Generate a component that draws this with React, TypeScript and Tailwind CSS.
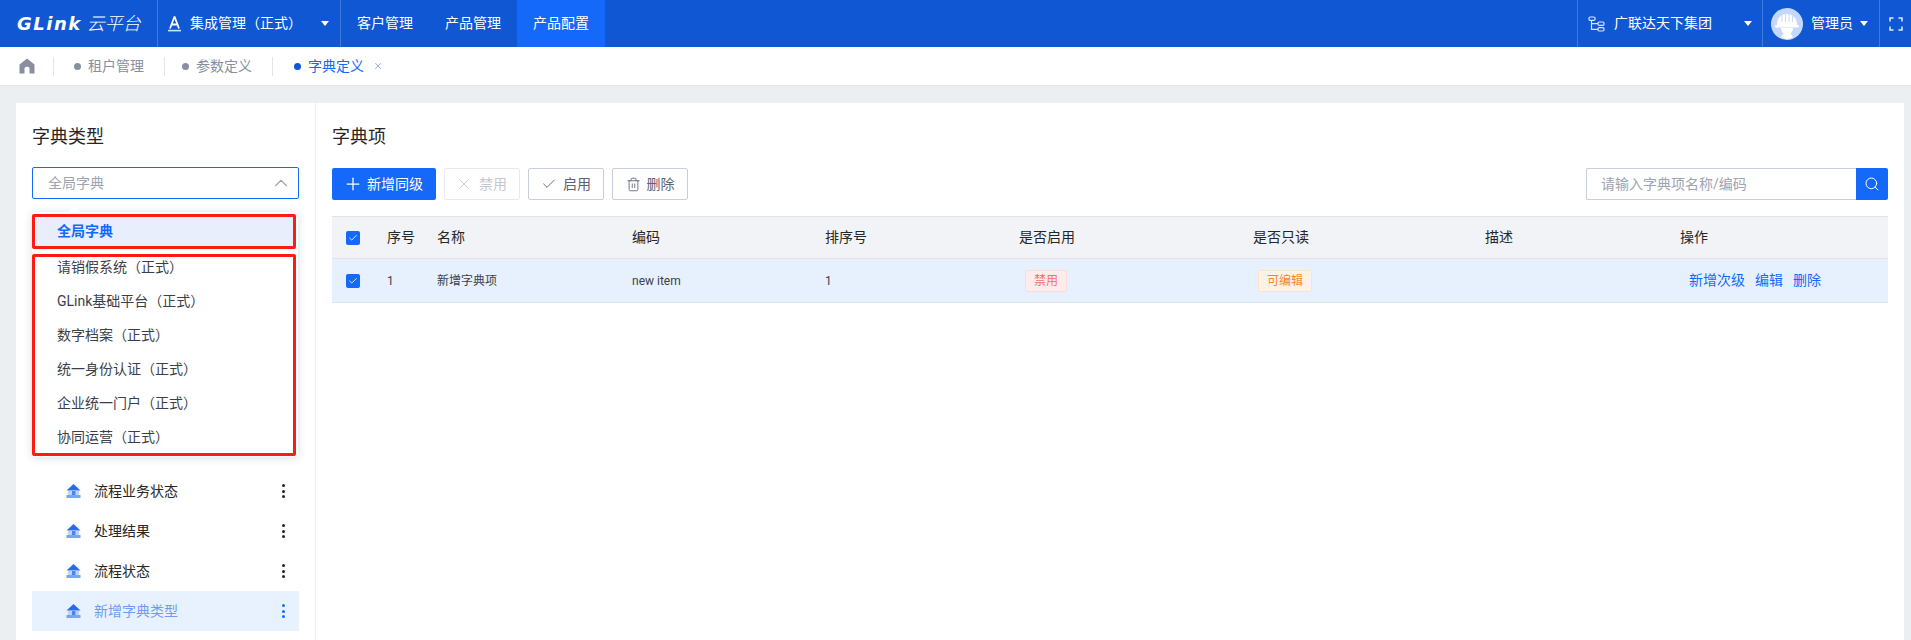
import React from 'react';
import { ChevronUp, Plus, X, Check, Trash2, Search } from 'lucide-react';

const FONT = "font-['Roboto','Noto_Sans_CJK_SC',sans-serif]";

function Caret() {
  return <span className="h-0 w-0 border-x-[4.5px] border-t-[5px] border-x-transparent border-t-white" />;
}

function Divider() {
  return <span className="h-[47px] w-px shrink-0 bg-[#3f7ae0]" />;
}

function AppIcon() {
  return (
    <svg width="15" height="16" viewBox="0 0 15 16" fill="none" className="shrink-0">
      <path d="M7.5 0.5 L3 12.5 M7.5 0.5 L12 12.5 M4.5 8.5 H10.5" stroke="#fff" strokeWidth="1.8" />
      <rect x="1" y="13.8" width="13" height="1.6" fill="#cfe0ff" />
    </svg>
  );
}

function OrgIcon() {
  return (
    <svg width="17" height="16" viewBox="0 0 17 16" fill="none" stroke="#d8e6ff" strokeWidth="1.2">
      <rect x="1" y="1" width="6" height="3.4" rx="1.2" />
      <rect x="10" y="6" width="6" height="3.4" rx="1.2" />
      <rect x="10" y="11.6" width="6" height="3.4" rx="1.2" />
      <path d="M3.5 4.4 V13.3 H10 M3.5 7.7 H10" />
    </svg>
  );
}

function Avatar() {
  return (
    <svg width="32" height="32" viewBox="0 0 32 32">
      <circle cx="16" cy="16" r="16" fill="#c4d8fb" />
      <path d="M6 17 C6 10 10 6 16 6 C22 6 26 10 26 17 Z" fill="#fff" />
      <path d="M11 7.5V14 M14.5 6V14 M18 6V14 M21.5 7.5V14" stroke="#c4d8fb" strokeWidth="0.9" />
      <rect x="4" y="17" width="24" height="2.6" rx="1.3" fill="#fff" />
      <path d="M10 20 H22 C22 23 20.5 24.5 19.5 25.5 L22 29 C19 31.5 13 31.5 10 29 L12.5 25.5 C11.5 24.5 10 23 10 20 Z" fill="#fff" />
    </svg>
  );
}

function Fullscreen() {
  return (
    <svg width="14" height="14" viewBox="0 0 14 14" fill="none" stroke="#e4eeff" strokeWidth="1.5">
      <path d="M1 4.5V1H4.5 M9.5 1H13V4.5 M13 9.5V13H9.5 M4.5 13H1V9.5" />
    </svg>
  );
}

function HomeIcon() {
  return (
    <svg width="16" height="16" viewBox="0 0 16 16" fill="#878fa0">
      <path d="M8 0.5 L15.5 6.5 V15.5 H10.5 V10.5 C10.5 8 5.5 8 5.5 10.5 V15.5 H0.5 V6.5 Z" />
    </svg>
  );
}

function TreeIcon() {
  return (
    <svg width="15" height="14" viewBox="0 0 15 14" className="shrink-0">
      <path d="M7.5 0 L14.5 6.5 H0.5 Z" fill="#2b6bea" />
      <rect x="2" y="7" width="11" height="4" fill="#bcd2f9" />
      <rect x="6" y="7" width="3.4" height="4" fill="#4c84ee" />
      <rect x="0.5" y="11" width="14" height="3" fill="#7aa4f3" />
    </svg>
  );
}

function Dots({ active }: { active?: boolean }) {
  const color = active ? 'bg-[#1a6bf5]' : 'bg-[#262626]';
  return (
    <span className="flex flex-col gap-[2.5px]">
      <i className={`block size-[3px] rounded-full ${color}`} />
      <i className={`block size-[3px] rounded-full ${color}`} />
      <i className={`block size-[3px] rounded-full ${color}`} />
    </span>
  );
}

function Box() {
  return (
    <span className="flex size-[14px] items-center justify-center rounded-[2px] bg-[#1469fb]">
      <Check size={10} color="#fff" strokeWidth={2} />
    </span>
  );
}

function Tab({ label, active }: { label: string; active?: boolean }) {
  return (
    <div className="flex items-center">
      <span className={`mr-[7px] size-[7px] rounded-full ${active ? 'bg-[#0f57d3]' : 'bg-[#878fa0]'}`} />
      <span className={`text-[14px] ${active ? 'text-[#1469fb]' : 'text-[#878fa0]'}`}>{label}</span>
    </div>
  );
}

const sources = ['请销假系统（正式）', 'GLink基础平台（正式）', '数字档案（正式）', '统一身份认证（正式）', '企业统一门户（正式）', '协同运营（正式）'];
const tree = ['流程业务状态', '处理结果', '流程状态', '新增字典类型'];
const tableCols = 'grid grid-cols-[55px_50px_195px_193px_194px_234px_232px_195px_208px] items-center';

export default function App() {
  return (
    <div className={`${FONT} flex h-[640px] w-[1911px] flex-col overflow-hidden bg-[#ebeff2] text-[#262626]`}>
      <header className="flex h-[47px] shrink-0 items-center bg-[#0f57d3] text-[14px] text-white">
        <div className="flex w-[157px] shrink-0 items-center pl-[17px]">
          <span className="font-['DejaVu_Sans',sans-serif] text-[18px] leading-none font-bold tracking-[1.5px] italic">GLink</span>
          <span className="ml-[5px] text-[18px] leading-none font-light italic">云平台</span>
        </div>
        <Divider />
        <div className="flex w-[182px] shrink-0 items-center pl-[9px]">
          <AppIcon />
          <span className="ml-[8px] w-[131px]">集成管理（正式）</span>
          <Caret />
        </div>
        <Divider />
        <nav className="flex">
          <span className="flex h-[47px] w-[88px] items-center justify-center">客户管理</span>
          <span className="flex h-[47px] w-[88px] items-center justify-center">产品管理</span>
          <span className="flex h-[47px] w-[88px] items-center justify-center bg-[#1469fb]">产品配置</span>
        </nav>
        <div className="ml-auto flex items-center">
          <Divider />
          <div className="flex w-[184px] items-center pl-[10px]">
            <OrgIcon />
            <span className="ml-[9px] w-[130px]">广联达天下集团</span>
            <Caret />
          </div>
          <Divider />
          <div className="flex w-[116px] items-center pl-[8px]">
            <Avatar />
            <span className="mr-[7px] ml-[8px]">管理员</span>
            <Caret />
          </div>
          <Divider />
          <div className="flex w-[31px] justify-center">
            <Fullscreen />
          </div>
        </div>
      </header>

      <div className="flex h-[39px] shrink-0 items-center border-b border-[#e2e6ea] bg-white pl-[19px]">
        <HomeIcon />
        <span className="mr-[20px] ml-[18px] h-[19px] w-px bg-[#e2e6ea]" />
        <Tab label="租户管理" />
        <span className="mr-[17px] ml-[20px] h-[19px] w-px bg-[#e2e6ea]" />
        <Tab label="参数定义" />
        <span className="mr-[21px] ml-[20px] h-[19px] w-px bg-[#e2e6ea]" />
        <Tab label="字典定义" active />
        <X size={10} color="#8c9be8" className="ml-[9px]" />
      </div>

      <main className="mt-[17px] ml-[16px] flex h-[537px] w-[1888px] bg-white">
        <aside className="relative w-[300px] shrink-0 border-r border-[#eef0f3] px-[16px] pt-[21px]">
          <h2 className="text-[18px] leading-[26px] font-normal">字典类型</h2>
          <div className="mt-[17px] flex h-[32px] w-[267px] items-center justify-between rounded-[2px] border border-[#1469fb] pr-[6px] pl-[15px] text-[14px] text-[#9ea4b0]">
            全局字典
            <ChevronUp size={22} color="#9ea4b0" strokeWidth={1.2} />
          </div>

          <div className="absolute top-[109px] left-[16px] z-10 h-[245px] w-[266px] rounded-[2px] bg-white text-[14px] shadow-[0_1px_8px_rgba(40,50,80,0.16)]">
            <span className="absolute -top-[4px] left-[38px] size-[9px] rotate-45 bg-white" />
            <div className="relative mx-[4px] mt-[5px] flex h-[29px] items-center bg-[#e8eefc] pl-[21px] font-bold text-[#1469fb]">全局字典</div>
            <div className="mt-[4px] flex flex-col">
              {sources.map(s => (
                <div key={s} className="flex h-[34px] items-center pl-[25px] text-[#3a3f4b]">{s}</div>
              ))}
            </div>
          </div>
          <span className="absolute top-[111px] left-[16px] z-20 h-[35px] w-[264px] rounded-[2px] border-[3px] border-[#fd1c14]" />
          <span className="absolute top-[151px] left-[16px] z-20 h-[202px] w-[264px] rounded-[2px] border-[3px] border-[#fd1c14]" />

          <ul className="mt-[272px] flex flex-col text-[14px]">
            {tree.map((t, i) => {
              const active = i === tree.length - 1;
              return (
                <li key={t} className={`flex h-[40px] items-center pr-[14px] pl-[34px] ${active ? 'bg-[#e8f2fe] text-[#6f9cf3]' : ''}`}>
                  <TreeIcon />
                  <span className="ml-[13px] flex-1">{t}</span>
                  <Dots active={active} />
                </li>
              );
            })}
          </ul>
        </aside>

        <section className="min-w-0 flex-1 px-[16px] pt-[21px]">
          <h2 className="text-[18px] leading-[26px] font-normal">字典项</h2>
          <div className="mt-[18px] flex h-[32px] items-center gap-[8px] text-[14px]">
            <button className="flex h-[32px] w-[104px] items-center justify-center gap-[4px] rounded-[2px] bg-[#1469fb] pr-[2px] text-white">
              <Plus size={20} strokeWidth={1.5} />
              新增同级
            </button>
            <button className="flex h-[32px] w-[76px] items-center justify-center gap-[6px] rounded-[2px] border border-[#e6e9ef] pr-[2px] text-[#c4c8d2]">
              <X size={18} strokeWidth={1.2} />
              禁用
            </button>
            <button className="flex h-[32px] w-[76px] items-center justify-center gap-[6px] rounded-[2px] border border-[#c8cedb] text-[#5b6272]">
              <Check size={16} strokeWidth={1.4} />
              启用
            </button>
            <button className="flex h-[32px] w-[76px] items-center justify-center gap-[6px] rounded-[2px] border border-[#c8cedb] text-[#5b6272]">
              <Trash2 size={15} strokeWidth={1.4} />
              删除
            </button>
            <div className="ml-auto flex h-[32px] w-[302px]">
              <div className="flex flex-1 items-center rounded-l-[2px] border border-r-0 border-[#c8cedb] pl-[14px] text-[#9ea4b0]">请输入字典项名称/编码</div>
              <span className="flex w-[32px] items-center justify-center rounded-r-[2px] bg-[#1469fb]">
                <Search size={16} color="#fff" strokeWidth={1.5} />
              </span>
            </div>
          </div>

          <div className={`${tableCols} mt-[16px] h-[43px] border-y border-[#dfe3ec] bg-[#f2f3f7] text-[14px]`}>
            <span className="pl-[14px]"><Box /></span>
            <span>序号</span>
            <span>名称</span>
            <span>编码</span>
            <span>排序号</span>
            <span>是否启用</span>
            <span>是否只读</span>
            <span>描述</span>
            <span>操作</span>
          </div>
          <div className={`${tableCols} h-[44px] border-b border-[#dfe3ec] bg-[#e7f1fe] text-[12px] text-[#3a3f4b]`}>
            <span className="pl-[14px]"><Box /></span>
            <span>1</span>
            <span>新增字典项</span>
            <span>new item</span>
            <span>1</span>
            <span>
              <span className="ml-[6px] inline-flex h-[22px] w-[42px] items-center justify-center rounded-[2px] border border-[#fbdcdc] bg-[#fdecec] text-[#f56c6c]">禁用</span>
            </span>
            <span>
              <span className="ml-[5px] inline-flex h-[22px] w-[54px] items-center justify-center rounded-[2px] border border-[#fde4c8] bg-[#fef2e4] text-[#f7891e]">可编辑</span>
            </span>
            <span />
            <span className="ml-[9px] flex gap-[10px] text-[14px] text-[#1469fb]">
              <span>新增次级</span>
              <span>编辑</span>
              <span>删除</span>
            </span>
          </div>
        </section>
      </main>
    </div>
  );
}
